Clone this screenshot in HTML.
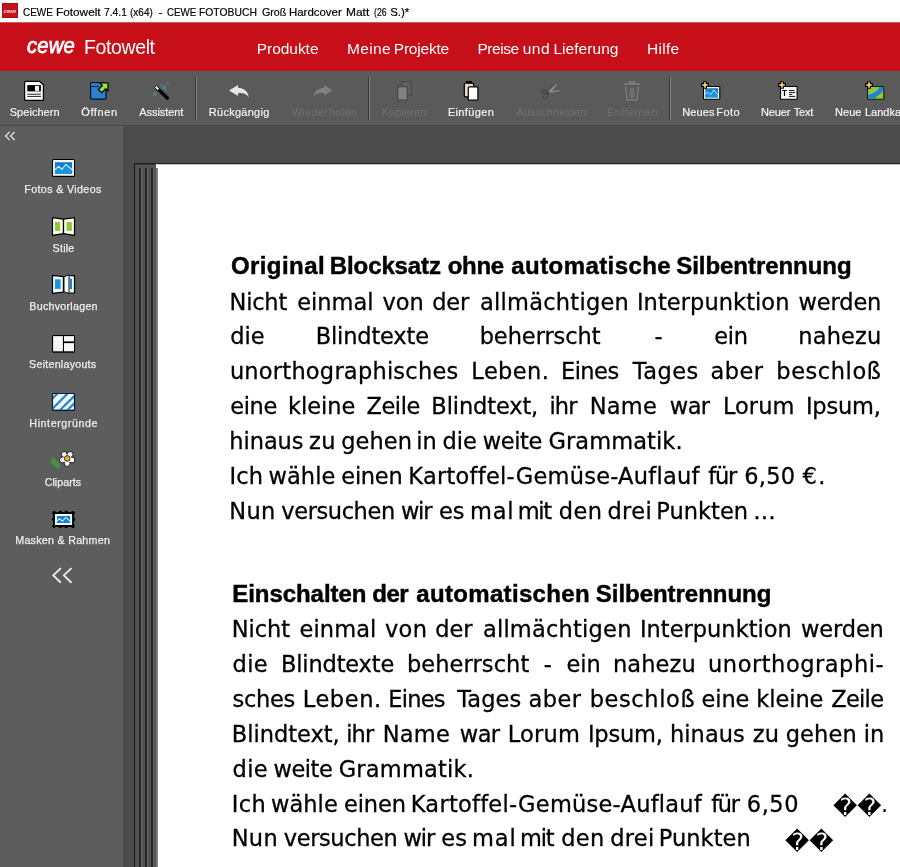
<!DOCTYPE html>
<html lang="de">
<head>
<meta charset="utf-8">
<title>CEWE Fotowelt 7.4.1 (x64) - CEWE FOTOBUCH Groß Hardcover Matt (26 S.)*</title>
<style>
*{box-sizing:border-box;margin:0;padding:0}
html,body{width:900px;height:867px;overflow:hidden;background:#4b4b4b}
body{position:relative;font-family:"Liberation Sans",sans-serif}
.bg{position:absolute}
.ov{position:absolute;overflow:visible;pointer-events:none}
#ui{position:absolute;left:0;top:0;width:900px;height:867px;will-change:transform}
#ui span,#ui div{position:absolute;white-space:nowrap}
.c{transform-origin:0 50%}
/* title bar */
#titlebar{left:0;top:0;width:900px;height:22px;background:#fff}
#appicon{left:2px;top:3px;width:15.5px;height:15.2px;background:#c2141b;border:1px solid #ad0c13}
/* red brand bar */
#redbar{left:0;top:22px;width:900px;height:49px;background:#c70f19}
#redline{left:0;top:22px;width:900px;height:1px;background:#d25a60}
#logo{left:27.4px;top:32px;font:italic 22.5px/28px "Liberation Sans",sans-serif;color:#fff;-webkit-text-stroke:0.75px #fff;letter-spacing:0.2px;transform-origin:0 0;transform:scaleX(0.9)}
/* toolbar */
#toolbar{left:0;top:71px;width:900px;height:54px;background:#5a5a5a}
#tbline{left:0;top:125px;width:900px;height:1px;background:#484848}
.sep{top:77px;width:2px;height:43px;background:#848484;border-left:1px solid #363636}
/* sidebar + workspace */
#sidebar{left:0;top:126px;width:123px;height:741px;background:#5d5d5d}
#work{left:123px;top:126px;width:777px;height:741px;background:#4b4b4b}
/* book */
#spine{left:134px;top:163px;width:23px;height:704px;background:#525252;border-left:1px solid #161616;border-top:1px solid #1c1c1c}
#spine i{position:absolute;top:4px;width:3px;height:700px;background:#262626;border-right:1px solid #666}
#spine b{position:absolute;left:0;top:0;width:22px;height:1px;background:#3a3a3a}
#page{left:156px;top:163px;width:744px;height:704px;background:#fff;border-top:1px solid #222}
#pedge{left:157px;top:164px;width:743px;height:1px;background:#c4c4c4}
#pshade{left:156px;top:168px;width:2px;height:699px;background:#7e7e7e}
/* page text */
.ln{left:0;width:900px;height:35px;color:#000;font-family:"DejaVu Sans","Liberation Sans",sans-serif;font-size:22.5px;line-height:35px;-webkit-text-stroke:0.3px #000}
.ln span{top:0}
.hd{font-family:"Liberation Sans",sans-serif;font-weight:bold;font-size:24px;color:#000;-webkit-text-stroke:0.45px #000}
.rc,.w{color:#000;font-family:"DejaVu Sans","Liberation Sans",sans-serif;font-size:22.5px;line-height:35px}
.rc{font-size:23.7px}
</style>
</head>
<body>
<div class="bg" id="titlebar"></div>
<div class="bg" id="redbar"></div>
<div class="bg" id="redline"></div>
<div class="bg" id="toolbar"></div>
<div class="bg" id="tbline"></div>
<div class="bg" id="work"></div>
<div class="bg" id="sidebar"></div>
<div class="bg" id="spine"><b></b><i style="left:4px"></i><i style="left:10px"></i><i style="left:16px;width:2.5px"></i></div>
<div class="bg" id="page"></div>
<div class="bg" id="pedge"></div>
<div class="bg" id="pshade"></div>
<div class="bg" id="appicon"></div>

<div id="ui">
<!--ICONS-->
<svg id="tbicons" class="ov" style="left:0;top:71px" width="900" height="55" viewBox="0 71 900 55">
  <!-- Speichern -->
  <path d="M24.6 82.3Q24.6 81.3 25.6 81.3H39.6L43.4 85.1V99.4Q43.4 100.4 42.4 100.4H25.6Q24.6 100.4 24.6 99.4Z" fill="#fff" stroke="#000" stroke-width="1.2"/>
  <rect x="27.3" y="85.1" width="13.6" height="6.3" fill="#000"/>
  <rect x="35" y="85.9" width="4.1" height="5" fill="#f4f4f4"/>
  <rect x="27.3" y="93.7" width="13.6" height="1.1" fill="#3a3a3a"/>
  <rect x="27.3" y="95.9" width="13.6" height="1.1" fill="#3a3a3a"/>
  <!-- Oeffnen -->
  <rect x="90.6" y="82.7" width="15.4" height="16.5" rx="1" fill="#2b80d2" stroke="#00132e" stroke-width="1.3"/>
  <rect x="91" y="83.1" width="5.8" height="3" fill="#3b74b4"/>
  <path d="M90.5 86.6H99" stroke="#021a3c" stroke-width="0.9" fill="none"/>
  <path d="M99.8 82.8H108V91L105.7 88.7L101.7 92.7L98.4 89.4L102.4 85.4Z" fill="#a3dc52" stroke="#081400" stroke-width="1.35" stroke-linejoin="round"/>
  <!-- Assistent -->
  <g fill="#3f98ac">
    <circle cx="164.2" cy="87.4" r="2.1" opacity=".6"/>
    <circle cx="167.6" cy="83.4" r="1.2" opacity=".6"/>
    <circle cx="161" cy="84.6" r="1.1" opacity=".6"/>
    <circle cx="154.8" cy="94" r="2" opacity=".6"/>
    <circle cx="165.6" cy="90.6" r="1.1" opacity=".5"/>
  </g>
  <path d="M156.3 87.4L167.3 98" stroke="#000" stroke-width="3.4" stroke-linecap="round"/>
  <path d="M156.2 87.2L157.9 88.9" stroke="#fff" stroke-width="2" stroke-linecap="round"/>
  <!-- Rueckgaengig -->
  <path d="M229 90.4L238.1 84.9V88C243.6 88 247.8 90.6 248.8 97.4C246.3 93.6 243.4 93 238.1 93.1V96Z" fill="#e6e6e6"/>
  <!-- Wiederholen (disabled) -->
  <path d="M332.3 90.3L324.1 84.9V88C318.8 88 314.2 90.6 313 97.2C315.6 93.6 318.6 93 324.1 93.1V95.8Z" fill="#808080"/>
  <!-- Kopieren (disabled) -->
  <rect x="401.8" y="81.6" width="9.6" height="13.6" fill="#5e5e5e" stroke="#454545" stroke-width="1"/>
  <rect x="397.8" y="86.8" width="9.4" height="13.2" fill="#828282" stroke="#454545" stroke-width="1.1"/>
  <!-- Einfuegen -->
  <rect x="466.1" y="81" width="5.8" height="2.4" rx="0.6" fill="#000"/>
  <rect x="464.3" y="83.2" width="9.4" height="13.6" rx="1" fill="#e4d9c7" stroke="#000" stroke-width="1.2"/>
  <rect x="468.3" y="86.8" width="9.6" height="13.4" rx="1" fill="#fff" stroke="#000" stroke-width="1.2"/>
  <!-- Ausschneiden (disabled) -->
  <g stroke="#474747" stroke-width="1.3" fill="none">
    <ellipse cx="543.9" cy="91.6" rx="2.9" ry="1.6"/>
    <ellipse cx="545.4" cy="96.3" rx="1.6" ry="2.5" transform="rotate(36 545.4 96.3)" fill="#6c6c6c"/>
    <path d="M549.4 91.6L546.6 94.4" stroke-width="1.6"/>
    <path d="M547.8 91.4L555.2 83.8" stroke-width="1"/>
  </g>
  <path d="M548.4 91.6L555.8 83.9L557.2 84.8L550.6 92.6Z" fill="#8e8e8e"/>
  <path d="M550.4 91.2L559.4 89.9L559.6 91.3L551 92.7Z" fill="#868686"/>
  <!-- Entfernen (disabled) -->
  <g stroke="#7d7d7d" fill="none" stroke-width="1.4">
    <path d="M629.6 83.2V81.8H634.4V83.2"/>
    <path d="M624 84H640" stroke-width="1.8"/>
    <path d="M625.6 86.4L627 100H637L638.4 86.4"/>
  </g>
  <rect x="629.4" y="87.6" width="5.2" height="10" fill="#707070"/>
  <!-- Neues Foto -->
  <rect x="703.5" y="86.5" width="16.3" height="12.8" rx="0.8" fill="#f2fbff" stroke="#000" stroke-width="1.1"/>
  <rect x="705.3" y="88.2" width="12.7" height="9.2" fill="#1f7fc8"/>
  <path d="M705.3 94.2L707.5 92L710.6 94.6L713.8 89.9L718 95.2V97.4H705.3Z" fill="#1b93de"/>
  <path d="M705.3 94.2L707.5 92L710.6 94.6L713.8 89.9L718 95.2" stroke="#b5ecff" stroke-width="1" fill="none"/>
  <path id="plus" d="M703.6 81.7H706.4V83.6H708.4V86.4H706.4V88.3H703.6V86.4H701.6V83.6H703.6Z" fill="#f6d26e" stroke="#000" stroke-width="1.1" stroke-linejoin="round"/>
  <!-- Neuer Text -->
  <rect x="780.5" y="86.5" width="16.6" height="12.8" rx="0.8" fill="#fdfdfd" stroke="#000" stroke-width="1.1"/>
  <text x="781.9" y="96" font-family="Liberation Sans, sans-serif" font-weight="bold" font-size="8.2" fill="#000">T</text>
  <g stroke="#111" stroke-width="1">
    <path d="M789 90.4H794.4M789 92.4H795.2M789 94.4H792.4M789 96.4H795.2"/>
  </g>
  <path d="M780.6 81.7H783.4V83.6H785.4V86.4H783.4V88.3H780.6V86.4H778.6V83.6H780.6Z" fill="#f6d26e" stroke="#000" stroke-width="1.1" stroke-linejoin="round"/>
  <!-- Neue Landkarte -->
  <rect x="867.5" y="86.5" width="16.3" height="12.8" rx="0.8" fill="#8fca3c" stroke="#0e1e08" stroke-width="1.1"/>
  <path d="M868.1 98.7V94.6C874 93 877.5 91 879 87.1H883.2V90.4C881 94 877 96 874.6 98.7Z" fill="#2583c4"/>
  <path d="M868.1 94.6C874 93 877.5 91 879 87.1" stroke="#6fd0c0" stroke-width="0.8" fill="none" opacity=".7"/>
  <path d="M867.6 81.7H870.4V83.6H872.4V86.4H870.4V88.3H867.6V86.4H865.6V83.6H867.6Z" fill="#f6d26e" stroke="#000" stroke-width="1.1" stroke-linejoin="round"/>
</svg>
<svg id="sbicons" class="ov" style="left:0;top:126px" width="123" height="741" viewBox="0 126 123 741">
  <!-- collapse chevrons -->
  <g stroke="#e4e4e4" stroke-width="1.3" fill="none" stroke-linecap="square">
    <path d="M9.2 132.4L5.6 136L9.2 139.6M14.2 132.4L10.6 136L14.2 139.6"/>
  </g>
  <g stroke="#ececec" stroke-width="1.9" fill="none" stroke-linecap="round" stroke-linejoin="round">
    <path d="M60.4 568.6L53.2 575.4L60.4 582.2M71 568.6L63.8 575.4L71 582.2"/>
  </g>
  <!-- Fotos & Videos -->
  <rect x="52.5" y="159.5" width="22" height="16.9" rx="1" fill="#f4fcff" stroke="#000" stroke-width="1.1"/>
  <rect x="54.9" y="162.2" width="17.2" height="11.6" fill="#1d76c4"/>
  <path d="M54.9 169.8L58.6 166.4L61.9 169.3L65.9 164.4L72.1 169.8V173.8H54.9Z" fill="#1a93e0"/>
  <path d="M54.9 169.8L58.6 166.4L61.9 169.3L65.9 164.4L72.1 169.8" stroke="#b8f0ff" stroke-width="1.2" fill="none"/>
  <!-- Stile -->
  <path d="M52.5 217.6L63.4 219.2L74.5 217.6V235.3L63.4 233.6L52.5 235.3Z" fill="#fbfff4" stroke="#000" stroke-width="1.2" stroke-linejoin="round"/>
  <path d="M63.45 219.2V233.6" stroke="#000" stroke-width="1.4"/>
  <rect x="55" y="222" width="5.2" height="8.9" fill="#8bcb3a"/>
  <rect x="66.6" y="222" width="5.3" height="8.9" fill="#8bcb3a"/>
  <!-- Buchvorlagen -->
  <path d="M52.5 275.4L63.4 276.6V292.2L52.5 293.3Z" fill="#f2fbff" stroke="#000" stroke-width="1.2" stroke-linejoin="round"/>
  <rect x="55" y="279.3" width="5.6" height="9.6" fill="#1a93e0"/>
  <path d="M68 275.6H74.5V293H68Z" fill="#f4fbff" stroke="#000" stroke-width="1.2" stroke-linejoin="round"/>
  <rect x="69.7" y="278.6" width="2.3" height="10.6" fill="#1a85c8"/>
  <path d="M64 276.8L69 274.8V293.6L64 291.6Z" fill="#f6f6f6" stroke="#111" stroke-width="1" stroke-linejoin="round"/>
  <!-- Seitenlayouts -->
  <rect x="52.5" y="335.5" width="22" height="16.6" rx="1" fill="#000" stroke="#000" stroke-width="1.1"/>
  <rect x="53.1" y="336.1" width="9.8" height="15.2" fill="#f6f6f6"/>
  <rect x="64" y="336.1" width="10" height="5.3" fill="#f6f6f6"/>
  <rect x="64" y="343.1" width="10" height="8.2" fill="#f6f6f6"/>
  <!-- Hintergruende -->
  <clipPath id="hgc"><rect x="53" y="394" width="21" height="15.8" rx="0.6"/></clipPath>
  <rect x="52.5" y="393.5" width="22" height="16.9" rx="1.2" fill="#eefaff" stroke="#04203c" stroke-width="1.1"/>
  <g clip-path="url(#hgc)" stroke="#2f86c2" stroke-width="2.2">
    <path d="M51 400L59 392M51.5 409.6L67.5 393.6M59 411L76 394.4M66.5 411L76 401.6"/>
  </g>
  <rect x="52.5" y="393.5" width="22" height="16.9" rx="1.2" fill="none" stroke="#04203c" stroke-width="1.1"/>
  <!-- Cliparts -->
  <path d="M51.4 457.4L53.9 457.6L59.9 463.6L60.1 467.2L57.6 468.8L51.2 463.2Z" fill="#3f9b3c" opacity=".85"/>
  <g fill="#fdfdfd" stroke="#1a1a1a" stroke-width="1">
    <circle cx="64.2" cy="454.4" r="2.9"/>
    <circle cx="70.2" cy="454.4" r="2.9"/>
    <circle cx="72" cy="460" r="2.9"/>
    <circle cx="67.2" cy="463.6" r="2.9"/>
    <circle cx="62.4" cy="460" r="2.9"/>
  </g>
  <circle cx="67.2" cy="458.6" r="4.2" fill="#fdfdfd"/>
  <circle cx="67.2" cy="458.4" r="2.8" fill="#e2b252" stroke="#3a2600" stroke-width="1"/>
  <!-- Masken & Rahmen -->
  <g fill="#000">
    <rect x="53" y="512" width="21" height="15"/>
    <circle cx="54.2" cy="513" r="2"/><circle cx="60.4" cy="512.4" r="1.8"/><circle cx="66.2" cy="512.4" r="1.8"/><circle cx="72.8" cy="513" r="2"/>
    <circle cx="54.2" cy="526" r="2"/><circle cx="60.4" cy="526.4" r="1.8"/><circle cx="66.2" cy="526.4" r="1.8"/><circle cx="72.8" cy="526" r="2"/>
    <circle cx="53.4" cy="519.4" r="1.6"/><circle cx="73.6" cy="519.4" r="1.6"/>
  </g>
  <rect x="54.9" y="514" width="17.2" height="11" fill="#f2fcff"/>
  <rect x="57" y="516" width="13.1" height="7" fill="#1d7fc8"/>
  <path d="M57 520.8L59.6 518.8L62.4 521.2L65.8 517.4L70.1 521.2" stroke="#b8f0ff" stroke-width="1.1" fill="none"/>
</svg>
<!--/ICONS-->
<!-- window title -->
<span id="appname" style="left:3.4px;top:7.6px;font:italic bold 5.6px/6px 'Liberation Sans',sans-serif;color:#ffc4c4;letter-spacing:-0.35px">cewe</span>
<span id="logo">cewe</span>
<div class="sep" style="left:195px"></div>
<div class="sep" style="left:368px"></div>
<div class="sep" style="left:668.5px"></div>
<!--CHROME-->
<span class="c" style="left:23.34px;top:4px;font-size:11.5px;line-height:17px;color:#000;-webkit-text-stroke:0.2px #000;transform:scaleX(0.865)">CEWE</span>
<span class="c" style="left:56.09px;top:4px;font-size:11.5px;line-height:17px;color:#000;-webkit-text-stroke:0.2px #000;transform:scaleX(1.026)">Fotowelt</span>
<span class="c" style="left:103.62px;top:4px;font-size:11.5px;line-height:17px;color:#000;-webkit-text-stroke:0.2px #000;transform:scaleX(0.897)">7.4.1</span>
<span class="c" style="left:130.30px;top:4px;font-size:11.5px;line-height:17px;color:#000;-webkit-text-stroke:0.2px #000;transform:scaleX(0.870)">(x64)</span>
<span class="c" style="left:158.38px;top:4px;font-size:11.5px;line-height:17px;color:#000;-webkit-text-stroke:0.2px #000">-</span>
<span class="c" style="left:166.96px;top:4px;font-size:11.5px;line-height:17px;color:#000;-webkit-text-stroke:0.2px #000;transform:scaleX(0.850)">CEWE</span>
<span class="c" style="left:199.26px;top:4px;font-size:11.5px;line-height:17px;color:#000;-webkit-text-stroke:0.2px #000;transform:scaleX(0.900)">FOTOBUCH</span>
<span class="c" style="left:261.74px;top:4px;font-size:11.5px;line-height:17px;color:#000;-webkit-text-stroke:0.2px #000;transform:scaleX(0.928)">Groß</span>
<span class="c" style="left:289.42px;top:4px;font-size:11.5px;line-height:17px;color:#000;-webkit-text-stroke:0.2px #000;transform:scaleX(0.994)">Hardcover</span>
<span class="c" style="left:345.96px;top:4px;font-size:11.5px;line-height:17px;color:#000;-webkit-text-stroke:0.2px #000;transform:scaleX(1.039)">Matt</span>
<span class="c" style="left:374.08px;top:4px;font-size:11.5px;line-height:17px;color:#000;-webkit-text-stroke:0.2px #000;transform:scaleX(0.760)">(26</span>
<span class="c" style="left:390.14px;top:4px;font-size:11.5px;line-height:17px;color:#000;-webkit-text-stroke:0.2px #000">S.)*</span>
<span class="c" style="left:83.97px;top:33px;font-size:19.5px;line-height:29px;color:#fff;letter-spacing:-0.38px">Fotowelt</span>
<span class="c" style="left:256.76px;top:37px;font-size:15.5px;line-height:23px;color:#fff;letter-spacing:-0.04px">Produkte</span>
<span class="c" style="left:347.00px;top:37px;font-size:15.5px;line-height:23px;color:#fff;letter-spacing:0.35px">Meine</span>
<span class="c" style="left:393.76px;top:37px;font-size:15.5px;line-height:23px;color:#fff;letter-spacing:-0.20px">Projekte</span>
<span class="c" style="left:477.41px;top:37px;font-size:15.5px;line-height:23px;color:#fff;letter-spacing:-0.44px">Preise</span>
<span class="c" style="left:522.86px;top:37px;font-size:15.5px;line-height:23px;color:#fff;letter-spacing:0.39px">und</span>
<span class="c" style="left:553.40px;top:37px;font-size:15.5px;line-height:23px;color:#fff;letter-spacing:0.05px">Lieferung</span>
<span class="c" style="left:647.00px;top:37px;font-size:15.5px;line-height:23px;color:#fff;letter-spacing:0.29px">Hilfe</span>
<span class="c" style="left:9.64px;top:104px;font-size:11px;line-height:16px;color:#f4f4f4;-webkit-text-stroke:0.2px #f4f4f4;letter-spacing:0.06px">Speichern</span>
<span class="c" style="left:81.31px;top:104px;font-size:11px;line-height:16px;color:#f4f4f4;-webkit-text-stroke:0.2px #f4f4f4;letter-spacing:0.58px">Öffnen</span>
<span class="c" style="left:139.31px;top:104px;font-size:11px;line-height:16px;color:#f4f4f4;-webkit-text-stroke:0.2px #f4f4f4;letter-spacing:-0.08px">Assistent</span>
<span class="c" style="left:208.82px;top:104px;font-size:11px;line-height:16px;color:#f4f4f4;-webkit-text-stroke:0.2px #f4f4f4;letter-spacing:0.27px">Rückgängig</span>
<span class="c" style="left:291.63px;top:104px;font-size:11px;line-height:16px;color:#707070;letter-spacing:0.36px">Wiederholen</span>
<span class="c" style="left:381.66px;top:104px;font-size:11px;line-height:16px;color:#707070;letter-spacing:0.10px">Kopieren</span>
<span class="c" style="left:447.88px;top:104px;font-size:11px;line-height:16px;color:#f4f4f4;-webkit-text-stroke:0.2px #f4f4f4;letter-spacing:0.35px">Einfügen</span>
<span class="c" style="left:516.62px;top:104px;font-size:11px;line-height:16px;color:#707070;letter-spacing:0.06px">Ausschneiden</span>
<span class="c" style="left:606.99px;top:104px;font-size:11px;line-height:16px;color:#707070;letter-spacing:0.34px">Entfernen</span>
<span class="c" style="left:682.32px;top:104px;font-size:11px;line-height:16px;color:#f4f4f4;-webkit-text-stroke:0.2px #f4f4f4;letter-spacing:0.07px">Neues</span>
<span class="c" style="left:716.32px;top:104px;font-size:11px;line-height:16px;color:#f4f4f4;-webkit-text-stroke:0.2px #f4f4f4;letter-spacing:0.41px">Foto</span>
<span class="c" style="left:760.88px;top:104px;font-size:11px;line-height:16px;color:#f4f4f4;-webkit-text-stroke:0.2px #f4f4f4;letter-spacing:-0.08px">Neuer</span>
<span class="c" style="left:793.75px;top:104px;font-size:11px;line-height:16px;color:#f4f4f4;-webkit-text-stroke:0.2px #f4f4f4;letter-spacing:-0.19px">Text</span>
<span class="c" style="left:835.08px;top:104px;font-size:11px;line-height:16px;color:#f4f4f4;-webkit-text-stroke:0.2px #f4f4f4;letter-spacing:0.01px">Neue</span>
<span class="c" style="left:864.89px;top:104px;font-size:11px;line-height:16px;color:#f4f4f4;-webkit-text-stroke:0.2px #f4f4f4;letter-spacing:0.01px">Landkarte</span>
<span class="c" style="left:24.33px;top:181px;font-size:10.7px;line-height:16px;color:#eee;-webkit-text-stroke:0.25px #eee;letter-spacing:0.36px">Fotos &amp; Videos</span>
<span class="c" style="left:52.62px;top:240px;font-size:10.7px;line-height:16px;color:#eee;-webkit-text-stroke:0.25px #eee;letter-spacing:0.21px">Stile</span>
<span class="c" style="left:29.33px;top:298px;font-size:10.7px;line-height:16px;color:#eee;-webkit-text-stroke:0.25px #eee;letter-spacing:0.26px">Buchvorlagen</span>
<span class="c" style="left:29.12px;top:356px;font-size:10.7px;line-height:16px;color:#eee;-webkit-text-stroke:0.25px #eee;letter-spacing:0.24px">Seitenlayouts</span>
<span class="c" style="left:29.33px;top:415px;font-size:10.7px;line-height:16px;color:#eee;-webkit-text-stroke:0.25px #eee;letter-spacing:0.58px">Hintergründe</span>
<span class="c" style="left:44.63px;top:474px;font-size:10.7px;line-height:16px;color:#eee;-webkit-text-stroke:0.25px #eee;letter-spacing:0.05px">Cliparts</span>
<span class="c" style="left:15.22px;top:532px;font-size:10.7px;line-height:16px;color:#eee;-webkit-text-stroke:0.25px #eee;letter-spacing:0.27px">Masken &amp; Rahmen</span>
<!--/CHROME-->
<!-- page content -->
<!--TEXT-->
<div class="ln hd" style="top:248px"><span style="left:230.92px;letter-spacing:0.43px">Original</span> <span style="left:329.86px;letter-spacing:-0.12px">Blocksatz</span> <span style="left:447.74px;letter-spacing:-0.29px">ohne</span> <span style="left:511.28px;letter-spacing:0.43px">automatische</span> <span style="left:676.26px;letter-spacing:-0.05px">Silbentrennung</span></div>
<div class="ln" style="top:285px"><span style="left:229.52px;letter-spacing:-0.20px">Nicht</span> <span style="left:297.20px;letter-spacing:0.01px">einmal</span> <span style="left:382.39px;letter-spacing:0.04px">von</span> <span style="left:432.23px;letter-spacing:-0.21px">der</span> <span style="left:479.91px;letter-spacing:0.26px">allmächtigen</span> <span style="left:636.88px;letter-spacing:0.07px">Interpunktion</span> <span style="left:798.49px;letter-spacing:-0.12px">werden</span></div>
<div class="ln" style="top:319px"><span style="left:230.23px;letter-spacing:0.02px">die</span> <span style="left:315.74px;letter-spacing:-0.16px">Blindtexte</span> <span style="left:479.65px;letter-spacing:-0.06px">beherrscht</span> <span style="left:654.38px;letter-spacing:0.30px">-</span> <span style="left:714.20px;letter-spacing:-0.22px">ein</span> <span style="left:798.34px;letter-spacing:0.14px">nahezu</span></div>
<div class="ln" style="top:354px"><span style="left:229.89px;letter-spacing:0.23px">unorthographisches</span> <span style="left:471.36px;letter-spacing:0.38px">Leben.</span> <span style="left:560.93px;letter-spacing:-0.51px">Eines</span> <span style="left:632.78px;letter-spacing:0.43px">Tages</span> <span style="left:710.55px;letter-spacing:0.47px">aber</span> <span style="left:776.34px;letter-spacing:0.56px">beschloß</span></div>
<div class="ln" style="top:389px"><span style="left:230.20px;letter-spacing:-0.35px">eine</span> <span style="left:288.00px;letter-spacing:-0.01px">kleine</span> <span style="left:366.44px;letter-spacing:-0.41px">Zeile</span> <span style="left:431.36px;letter-spacing:-0.13px">Blindtext,</span> <span style="left:549.44px;letter-spacing:-0.91px">ihr</span> <span style="left:589.75px;letter-spacing:0.20px">Name</span> <span style="left:669.84px;letter-spacing:-0.58px">war</span> <span style="left:722.93px;letter-spacing:0.02px">Lorum</span> <span style="left:805.88px;letter-spacing:-0.18px">Ipsum,</span></div>
<div class="ln" style="top:424px"><span style="left:229.34px;letter-spacing:-0.07px">hinaus</span> <span style="left:309.03px;letter-spacing:0.51px">zu</span> <span style="left:341.31px;letter-spacing:0.03px">gehen</span> <span style="left:416.20px;letter-spacing:0.14px">in</span> <span style="left:442.40px">die</span> <span style="left:482.84px;letter-spacing:-0.40px">weite</span> <span style="left:548.56px;letter-spacing:0.07px">Grammatik.</span></div>
<div class="ln" style="top:459px"><span style="left:229.55px;letter-spacing:0.15px">Ich</span> <span style="left:268.49px;letter-spacing:0.07px">wähle</span> <span style="left:341.32px;letter-spacing:-0.28px">einen</span> <span style="left:408.36px;letter-spacing:0.25px">Kartoffel-Gemüse-Auflauf</span> <span style="left:708.36px;letter-spacing:-1.28px">für</span> <span style="left:744.22px;letter-spacing:0.25px">6,50</span> <span style="left:802.44px;letter-spacing:1.50px">€.</span></div>
<div class="ln" style="top:494px"><span style="left:229.36px;letter-spacing:0.30px">Nun</span> <span style="left:281.30px;letter-spacing:-0.41px">versuchen</span> <span style="left:400.94px;letter-spacing:-1.23px">wir</span> <span style="left:438.89px;letter-spacing:-0.09px">es</span> <span style="left:470.00px;letter-spacing:0.71px">mal</span> <span style="left:517.65px;letter-spacing:-1.25px">mit</span> <span style="left:558.69px;letter-spacing:0.45px">den</span> <span style="left:607.40px;letter-spacing:0.38px">drei</span> <span style="left:656.36px;letter-spacing:0.01px">Punkten</span> <span style="left:753.29px;letter-spacing:0.30px">…</span></div>
<div class="ln hd" style="top:576px"><span style="left:232.29px;letter-spacing:-0.06px">Einschalten</span> <span style="left:372.32px;letter-spacing:-0.49px">der</span> <span style="left:416.28px;letter-spacing:0.33px">automatischen</span> <span style="left:595.78px;letter-spacing:-0.03px">Silbentrennung</span></div>
<div class="ln" style="top:612px"><span style="left:231.74px;letter-spacing:-0.06px">Nicht</span> <span style="left:299.62px;letter-spacing:0.07px">einmal</span> <span style="left:384.95px;letter-spacing:0.32px">von</span> <span style="left:435.23px;letter-spacing:-0.03px">der</span> <span style="left:482.91px;letter-spacing:0.22px">allmächtigen</span> <span style="left:639.88px;letter-spacing:0.02px">Interpunktion</span> <span style="left:800.94px;letter-spacing:-0.11px">werden</span></div>
<div class="ln" style="top:647px"><span style="left:232.40px;letter-spacing:0.47px">die</span> <span style="left:280.93px;letter-spacing:-0.15px">Blindtexte</span> <span style="left:406.88px;letter-spacing:0.10px">beherrscht</span> <span style="left:543.69px;letter-spacing:0.30px">-</span> <span style="left:566.62px;letter-spacing:-0.09px">ein</span> <span style="left:612.88px;letter-spacing:0.12px">nahezu</span> <span style="left:708.08px;letter-spacing:0.53px">unorthographi-</span></div>
<div class="ln" style="top:682px"><span style="left:232.60px;letter-spacing:-0.30px">sches</span> <span style="left:302.75px;letter-spacing:0.57px">Leben.</span> <span style="left:388.36px;letter-spacing:-0.78px">Eines</span> <span style="left:457.22px;letter-spacing:0.08px">Tages</span> <span style="left:528.55px;letter-spacing:0.47px">aber</span> <span style="left:589.65px;letter-spacing:0.61px">beschloß</span> <span style="left:701.62px;letter-spacing:-0.13px">eine</span> <span style="left:756.34px;letter-spacing:-0.07px">kleine</span> <span style="left:831.16px;letter-spacing:-0.68px">Zeile</span></div>
<div class="ln" style="top:717px"><span style="left:231.74px;letter-spacing:-0.01px">Blindtext,</span> <span style="left:346.20px;letter-spacing:-0.82px">ihr</span> <span style="left:382.75px;letter-spacing:0.21px">Name</span> <span style="left:459.84px;letter-spacing:-0.58px">war</span> <span style="left:507.75px;letter-spacing:0.20px">Lorum</span> <span style="left:587.88px;letter-spacing:-0.18px">Ipsum,</span> <span style="left:670.00px;letter-spacing:0.05px">hinaus</span> <span style="left:752.86px;letter-spacing:0.18px">zu</span> <span style="left:785.67px;letter-spacing:0.15px">gehen</span> <span style="left:863.64px;letter-spacing:0.24px">in</span></div>
<div class="ln" style="top:752px"><span style="left:232.40px;letter-spacing:0.47px">die</span> <span style="left:273.49px;letter-spacing:-0.47px">weite</span> <span style="left:338.74px;letter-spacing:0.19px">Grammatik.</span></div>
<div class="ln" style="top:787px"><span style="left:231.72px;letter-spacing:0.34px">Ich</span> <span style="left:270.94px;letter-spacing:0.07px">wähle</span> <span style="left:343.89px;letter-spacing:-0.09px">einen</span> <span style="left:410.74px;letter-spacing:0.25px">Kartoffel-Gemüse-Auflauf</span> <span style="left:711.28px;letter-spacing:-1.37px">für</span> <span style="left:746.79px;letter-spacing:0.56px">6,50</span></div>
<span class="rc" style="left:833px;top:790px">��</span><span class="w" style="left:881px;top:787px">.</span>
<div class="ln" style="top:821px"><span style="left:231.74px;letter-spacing:0.28px">Nun</span> <span style="left:283.85px;letter-spacing:-0.41px">versuchen</span> <span style="left:403.49px;letter-spacing:-1.13px">wir</span> <span style="left:441.32px;letter-spacing:-0.02px">es</span> <span style="left:472.00px;letter-spacing:0.88px">mal</span> <span style="left:520.00px;letter-spacing:-1.21px">mit</span> <span style="left:561.22px;letter-spacing:0.34px">den</span> <span style="left:610.23px;letter-spacing:0.26px">drei</span> <span style="left:658.74px;letter-spacing:0.05px">Punkten</span></div>
<span class="rc" style="left:785px;top:825px">��</span>
<!--/TEXT-->
</div>
</body>
</html>
